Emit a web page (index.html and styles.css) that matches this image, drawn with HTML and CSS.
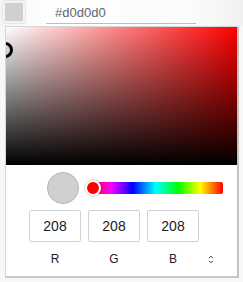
FILE: index.html
```html
<!DOCTYPE html>
<html lang="en">
<head>
    <meta charset="UTF-8">
    <title>Color picker</title>
    <link rel="stylesheet" href="styles.css">
</head>
<body>
    <div class="field">
        <div class="swatch"></div>
        <div class="hex">#d0d0d0</div>
    </div>

    <div class="picker">
        <div class="saturation">
            <span class="sat-pointer" style="left: 0%; top: 17%"></span>
        </div>

        <div class="picker-body">
            <div class="controls">
                <div class="preview"></div>
                <div class="hue">
                    <span class="hue-thumb" style="left: 0%"></span>
                </div>
            </div>

            <div class="fields">
                <div class="channel">
                    <div class="channel-input">208</div>
                    <div class="channel-label">R</div>
                </div>
                <div class="channel">
                    <div class="channel-input">208</div>
                    <div class="channel-label">G</div>
                </div>
                <div class="channel">
                    <div class="channel-input">208</div>
                    <div class="channel-label">B</div>
                </div>
                <div class="toggle">
                    <svg width="6" height="9" viewBox="0 0 6 9">
                        <path d="M1 3.2 L3 1.2 L5 3.2 M1 5.8 L3 7.8 L5 5.8" fill="none" stroke="#333" stroke-width="1"/>
                    </svg>
                </div>
            </div>
        </div>
    </div>
</body>
</html>
```

FILE: styles.css
```css
* {
    margin: 0;
    padding: 0;
    box-sizing: border-box;
}

body {
    background: #f7f7f7;
    font-family: "Liberation Sans", Arial, sans-serif;
    color: #333;
    width: 243px;
    height: 282px;
    overflow: hidden;
}

.field {
    display: flex;
    align-items: flex-start;
    height: 26px;
    padding: 1px 0 0 3px;
    background: linear-gradient(to right, #f4f4f4, #ffffff 20%, #fbfbfb 80%, #f0f0f0);
}

.swatch {
    width: 22px;
    height: 22px;
    background: #d0d0d0;
    border: 2px solid #f4f4f4;
    border-radius: 3px;
    box-shadow: 0 0 0 1px #e6e6e6;
}

.hex {
    width: 150px;
    height: 23px;
    margin-left: 21px;
    padding: 4px 0 0 9px;
    font-size: 13px;
    color: #5e6573;
    border-bottom: 1px solid #bdbdbd;
}

.picker {
    width: 234px;
    margin-left: 5px;
    background: #fff;
    border: 1px solid #d6d6d6;
    border-right: 2px solid #c4c4c4;
    border-bottom: 2px solid #c8c8c8;
    padding-bottom: 10px;
}

.saturation {
    position: relative;
    overflow: hidden;
    height: 138px;
    background:
        linear-gradient(to top, #000, rgba(0,0,0,0)),
        linear-gradient(to right, #fff, rgba(255,255,255,0)),
        #ff0000;
}

.sat-pointer {
    position: absolute;
    width: 16px;
    height: 16px;
    margin: -8px 0 0 -9px;
    border: 3px solid #000;
    border-radius: 50%;
}

.picker-body {
    padding: 7px 0 0 23px;
}

.controls {
    display: flex;
    align-items: center;
    padding-left: 18px;
}

.preview {
    width: 32px;
    height: 32px;
    border-radius: 50%;
    background: #d0d0d0;
    border: 1px solid #b4b4b4;
}

.hue {
    position: relative;
    width: 135px;
    height: 12px;
    margin-left: 9px;
    border-radius: 2px;
    background: linear-gradient(to right, #f00 0%, #f0f 17%, #00f 33%, #0ff 50%, #0f0 67%, #ff0 83%, #f00 100%);
}

.hue-thumb {
    position: absolute;
    top: 50%;
    width: 16px;
    height: 16px;
    margin: -8px 0 0 -3px;
    border-radius: 50%;
    background: #f00;
    border: 2px solid #fff;
    box-shadow: 0 0 1px 1px rgba(0,0,0,0.15);
}

.fields {
    display: flex;
    gap: 7px;
    margin-top: 6px;
}

.channel {
    width: 52px;
}

.channel-input {
    height: 32px;
    border: 1px solid #d2d2d2;
    border-radius: 2px;
    font-size: 14px;
    line-height: 30px;
    text-align: center;
    color: #222;
}

.channel-label {
    margin-top: 10px;
    font-size: 12px;
    line-height: 14px;
    text-align: center;
    color: #222;
}

.toggle {
    display: flex;
    align-items: center;
    height: 14px;
    margin-top: 42px;
    padding-left: 2px;
}
```
